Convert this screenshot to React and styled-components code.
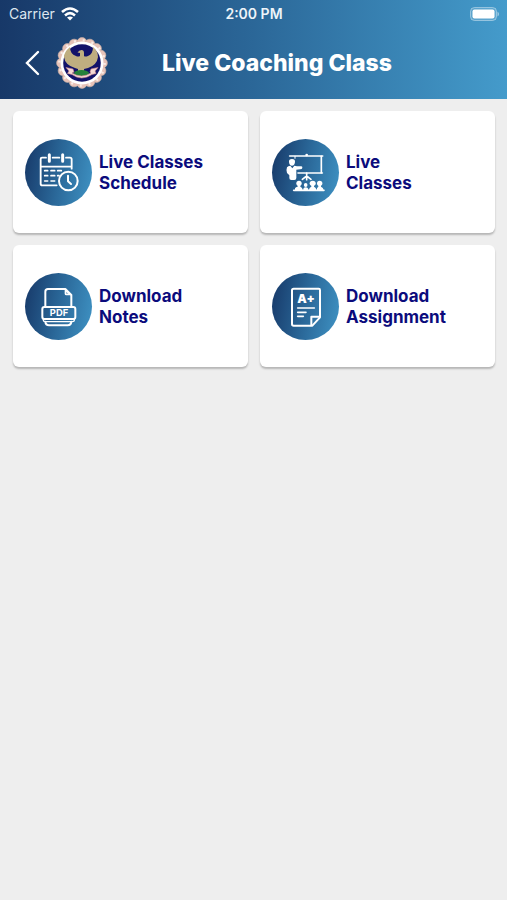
import React from 'react';
import styled, { createGlobalStyle } from 'styled-components';

const GlobalStyle = createGlobalStyle`
  * {
    box-sizing: border-box;
  }
  body {
    margin: 0;
    background: #eeeeee;
    font-family: Inter, "Liberation Sans", sans-serif;
  }
`;

const Page = styled.div`
  min-height: 100vh;
`;

const Header = styled.header`
  background: linear-gradient(90deg, #173868 0%, #2b6798 50%, #449bcb 100%);
  color: #fff;
  padding-bottom: 9px;
`;

const StatusBar = styled.div`
  display: grid;
  grid-template-columns: 1fr auto 1fr;
  align-items: center;
  height: 28px;
  padding: 0 8px 0 9px;
  font-size: 14px;
  line-height: 20px;
`;

const Carrier = styled.span`
  display: flex;
  align-items: center;
  gap: 6px;
  color: #dde6ef;
`;

const Time = styled.time`
  font-weight: 600;
  color: #eef4f9;
`;

const Battery = styled.span`
  display: flex;
  justify-content: flex-end;
`;

const NavBar = styled.div`
  display: flex;
  align-items: center;
  height: 62px;
  padding: 8px 62px 0 18px;
`;

const BackButton = styled.button`
  display: flex;
  align-items: center;
  justify-content: center;
  width: 28px;
  height: 44px;
  padding: 0;
  margin-right: 9px;
  border: none;
  background: transparent;
  color: #fff;
  cursor: pointer;
`;

const Title = styled.h1`
  flex: 1;
  margin: 0;
  font-size: 23px;
  line-height: 28px;
  font-weight: 800;
  text-align: center;
  white-space: nowrap;
`;

const Menu = styled.main`
  display: grid;
  grid-template-columns: 1fr 1fr;
  gap: 12px;
  padding: 12px 12px 12px 13px;
`;

const Card = styled.button`
  display: flex;
  align-items: center;
  gap: 7px;
  padding: 28px 12px 27px;
  border: none;
  border-radius: 6px;
  background: #fff;
  box-shadow: 0 2px 2px rgba(0, 0, 0, 0.24);
  color: #0b0b7c;
  font-family: inherit;
  text-align: left;
  cursor: pointer;
`;

const IconCircle = styled.span`
  display: flex;
  flex: none;
  width: 67px;
  height: 67px;
  border-radius: 50%;
  background: linear-gradient(100deg, #183c6c 5%, #2a6798 50%, #3d8fc0 95%);
`;

const CardLabel = styled.span`
  font-size: 17px;
  line-height: 21px;
  font-weight: 700;
  white-space: pre-line;
`;

const Icon = ({ children }) => (
  <svg
    width="67"
    height="67"
    viewBox="15 20 201 201"
    fill="none"
    stroke="#fff"
    strokeWidth="5.5"
    strokeLinecap="round"
    strokeLinejoin="round"
    aria-hidden="true"
  >
    {children}
  </svg>
);

const ScheduleIcon = () => (
  <Icon>
    <path d="M78 76H66Q62 76 62 80V154Q62 159 67 159H110M98 76H118M138 76H150Q155 76 155 81V109M62 103H155" />
    <path d="M88 67V87M128 67V87" strokeWidth="9" />
    <path
      d="M74 115H83M93 115H104M113 115H124M74 130H83M93 130H104M113 130H117M74 146H83M93 146H104"
      strokeWidth="5"
    />
    <circle cx="145" cy="146" r="28" strokeWidth="6" />
    <path d="M144 130V147L153 155" strokeWidth="6" />
  </Icon>
);

const ClassesIcon = () => (
  <Icon>
    <path d="M68 71H167" strokeWidth="5" />
    <path d="M163 72V121" strokeWidth="5" />
    <path d="M84 72V78" strokeWidth="3" />
    <path d="M93 122H166" strokeWidth="5" />
    <circle cx="119" cy="68" r="4" fill="#fff" stroke="none" />
    <g fill="#fff" stroke="none">
      <path d="M66 89Q65 80 75 80Q85 80 84 89Q83 100 75 100Q67 100 66 89Z" />
      <path d="M60 105Q63 100 70 100L76 108L82 100L90 102H103Q107 103 106 107Q105 111 100 111L88 112V137Q88 143 82 143H73Q67 143 67 137V129L60 122Q57 112 60 105Z" />
    </g>
    <path d="M119 122V142M119 131L106 141M119 131L132 141" strokeWidth="5" />
    <g fill="#fff" stroke="none">
      <ellipse cx="96" cy="153" rx="8" ry="8" />
      <path d="M84 174V168Q86 164 92 163V156H100V163Q107 165 107 174Z" />
      <ellipse cx="116" cy="158" rx="5.5" ry="6" />
      <path d="M109 174Q108 165 116 165Q124 165 124 174Z" />
      <ellipse cx="137" cy="153" rx="9" ry="8" />
      <path d="M126 174Q126 165 133 163V156H141V163Q148 165 148 174Z" />
      <ellipse cx="158" cy="153" rx="8" ry="8" />
      <path d="M149 174Q149 165 154 163V156H162V163Q169 165 170 174Z" />
    </g>
    <path d="M80 174H171" strokeWidth="5" />
  </Icon>
);

const NotesIcon = () => (
  <Icon>
    <path d="M76 120V76Q76 68 84 68H136L154 86V120" strokeWidth="6" />
    <path d="M136 70V82Q136 85 139 85H152Z" fill="#fff" fillOpacity="0.6" strokeWidth="4" />
    <rect x="67" y="122" width="99" height="36" rx="6" strokeWidth="6" />
    <path d="M70 158V162Q70 166 76 166H157Q163 166 163 162V158" strokeWidth="4" />
    <path d="M76 166Q77 177 87 177H143Q153 177 154 166" strokeWidth="6" />
    <text
      x="117"
      y="150"
      textAnchor="middle"
      fontSize="28"
      fontWeight="700"
      fill="#fff"
      stroke="none"
    >
      PDF
    </text>
  </Icon>
);

const AssignmentIcon = () => (
  <Icon>
    <path d="M80 67H155Q159 67 159 71V153L136 178H80Q75 178 75 173V72Q75 67 80 67Z" strokeWidth="6" />
    <path d="M157 151H133V176" strokeWidth="6" />
    <path d="M92 125H142M92 138H117M92 150H109" strokeWidth="5" />
    <text
      x="117"
      y="109"
      textAnchor="middle"
      fontSize="36"
      fontWeight="900"
      fill="#fff"
      stroke="none"
    >
      A+
    </text>
  </Icon>
);

const petals = Array.from({ length: 16 }, (_, i) => (i * Math.PI) / 8);

const Logo = () => (
  <svg width="54" height="54" viewBox="0 0 54 54" role="img" aria-label="Institute emblem">
    {petals.map((a) => (
      <circle
        key={a}
        cx={27 + 20.4 * Math.cos(a)}
        cy={27 + 20.4 * Math.sin(a)}
        r="5"
        fill="#e6c2b8"
        stroke="#d3b5a8"
        strokeWidth="0.6"
      />
    ))}
    <circle cx="27" cy="27" r="22.6" fill="none" stroke="#f7ebe6" strokeWidth="2.4" strokeDasharray="2 6.88" />
    <circle cx="27" cy="27" r="21.5" fill="#fff" />
    <circle cx="27" cy="27" r="18.8" fill="#12126a" />
    <path
      d="M15 11Q9 16 9 21Q10 29 20 32L23 33V36H29V33L33 32Q42 29 43 21Q43 15 38 11Q38 18 33 20Q30 21 29 20V17Q29 14 26.500 14Q24 14 22.500 16.500L25 17V20Q23 21 21 20Q15 18 15 11Z"
      fill="#bfae80"
    />
    <ellipse cx="26.5" cy="37" rx="7.5" ry="3" fill="#25803a" />
    <path
      d="M11 31.500L18 33L19 36L17 37Q26.500 43 36 37L35 36L36 33L43 31.500L40 35L41 37.500L37 38.500Q26.500 45.500 17 38.500L12.500 37.500L14 35Z"
      fill="#f4d8d4"
      stroke="#cf8c8c"
      strokeWidth="0.6"
    />
  </svg>
);

const items = [
  { label: 'Live Classes\nSchedule', icon: <ScheduleIcon /> },
  { label: 'Live\nClasses', icon: <ClassesIcon /> },
  { label: 'Download\nNotes', icon: <NotesIcon /> },
  { label: 'Download\nAssignment', icon: <AssignmentIcon /> },
];

const App = () => {
  return (
    <Page>
      <GlobalStyle />
      <Header>
        <StatusBar>
          <Carrier>
            Carrier
            <svg width="18" height="14" viewBox="0 0 18 14" fill="none" stroke="#fff" strokeWidth="2.6" aria-hidden="true">
              <path d="M1 5Q9 -2 17 5" />
              <path d="M4 8.4Q9 4 14 8.4" />
              <path d="M9 13.6L6 10.6Q9 8.2 12 10.6Z" fill="#fff" stroke="none" />
            </svg>
          </Carrier>
          <Time>2:00 PM</Time>
          <Battery>
            <svg width="29" height="14" viewBox="0 0 29 14" role="img" aria-label="Battery full">
              <rect x="0.5" y="0.5" width="26" height="13" rx="4" fill="#fff" fillOpacity="0.15" stroke="#fff" strokeOpacity="0.4" />
              <rect x="2.5" y="2.5" width="22" height="9" rx="2" fill="#fff" />
              <path d="M27.5 4.5Q29 5.5 29 7Q29 8.5 27.5 9.5Z" fill="#fff" fillOpacity="0.5" />
            </svg>
          </Battery>
        </StatusBar>
        <NavBar>
          <BackButton aria-label="Back">
            <svg width="16" height="26" viewBox="0 0 16 26" fill="none" stroke="currentColor" strokeWidth="2.4" strokeLinecap="round">
              <path d="M14 2L3 13L14 24" />
            </svg>
          </BackButton>
          <Logo />
          <Title>Live Coaching Class</Title>
        </NavBar>
      </Header>
      <Menu>
        {items.map((item) => (
          <Card key={item.label} type="button">
            <IconCircle>{item.icon}</IconCircle>
            <CardLabel>{item.label}</CardLabel>
          </Card>
        ))}
      </Menu>
    </Page>
  );
};

export default App;
